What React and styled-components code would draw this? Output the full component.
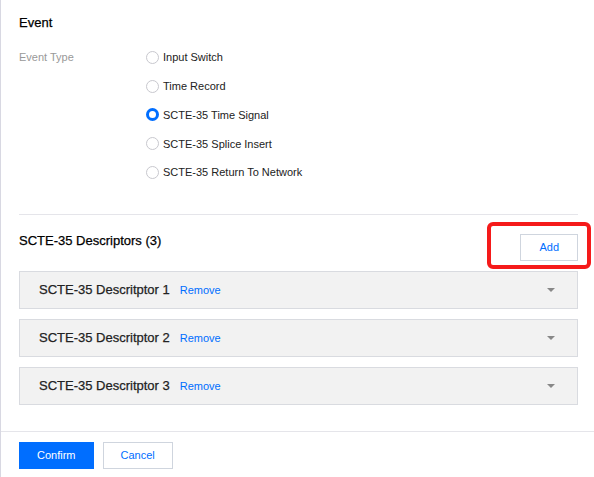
import React from 'react';
import styled, { createGlobalStyle } from 'styled-components';

const GlobalStyle = createGlobalStyle`
  html, body {
    margin: 0;
    padding: 0;
    background: #fff;
  }
  body {
    font-family: "Liberation Sans", Arial, sans-serif;
    color: #000;
  }
  * {
    box-sizing: border-box;
  }
`;

const Page = styled.div`
  width: 594px;
  height: 477px;
  background: #fff;
  border-left: 1px solid #d8d8e2;
  display: flex;
  flex-direction: column;
  overflow: hidden;
`;

const Body = styled.div`
  padding: 15px 16px 0 18px;
  display: flex;
  flex-direction: column;
`;

const Heading = styled.h3`
  margin: 0;
  font-size: 13px;
  line-height: 16px;
  font-weight: normal;
  -webkit-text-stroke: 0.25px #000;
  color: #000;
`;

const FormRow = styled.div`
  display: flex;
  margin-top: 12px;
`;

const Label = styled.div`
  width: 127px;
  flex-shrink: 0;
  font-size: 11px;
  color: #999;
  line-height: 29px;
`;

const RadioGroup = styled.div`
  display: flex;
  flex-direction: column;
`;

const RadioRow = styled.label`
  display: flex;
  align-items: center;
  height: 28.75px;
  font-size: 11px;
  color: #222;
  gap: 4px;
  cursor: pointer;
`;

const Circle = styled.span`
  width: 13px;
  height: 13px;
  border-radius: 50%;
  background: #fff;
  border: ${p => (p.$checked ? '3.5px solid #006eff' : '1px solid #c8c8ce')};
`;

const Divider = styled.div`
  height: 1px;
  background: #e5e5ea;
  margin-top: 27px;
`;

const SectionHeader = styled.div`
  display: flex;
  justify-content: space-between;
  align-items: flex-start;
  margin-top: 19px;
`;

const SectionTitle = styled.div`
  font-size: 13px;
  line-height: 14px;
  color: #000;
  -webkit-text-stroke: 0.25px #000;
`;

const AddWrap = styled.div`
  position: relative;
`;

const Highlight = styled.span`
  position: absolute;
  left: -33px;
  top: -12px;
  width: 104px;
  height: 47px;
  border: 4px solid #f51a1a;
  border-radius: 6px;
  pointer-events: none;
`;

const Button = styled.button`
  height: 27px;
  padding: 0 ${p => p.$pad || 19}px;
  font-family: inherit;
  font-size: 11px;
  border: 1px solid ${p => (p.$primary ? '#006eff' : '#cfd5de')};
  background: ${p => (p.$primary ? '#006eff' : '#fff')};
  color: ${p => (p.$primary ? '#fff' : '#006eff')};
  cursor: pointer;
`;

const Panels = styled.div`
  display: flex;
  flex-direction: column;
  gap: 10px;
  margin-top: 10px;
`;

const Panel = styled.div`
  height: 38px;
  display: flex;
  align-items: center;
  padding: 0 22px 0 19px;
  background: #f2f2f2;
  border: 1px solid #d9dbe0;
`;

const PanelTitle = styled.span`
  font-size: 13px;
  color: #222;
  -webkit-text-stroke: 0.25px #222;
`;

const RemoveLink = styled.a`
  margin-left: 10px;
  font-size: 11px;
  color: #006eff;
  cursor: pointer;
`;

const Caret = styled.span`
  margin-left: auto;
  width: 0;
  height: 0;
  border-left: 4px solid transparent;
  border-right: 4px solid transparent;
  border-top: 4px solid #888;
`;

const Footer = styled.div`
  margin-top: 26px;
  border-top: 1px solid #e5e5ea;
  padding: 10px 0 0 18px;
  display: flex;
  gap: 9px;
`;

const eventTypes = [
  'Input Switch',
  'Time Record',
  'SCTE-35 Time Signal',
  'SCTE-35 Splice Insert',
  'SCTE-35 Return To Network',
];

const descriptors = [1, 2, 3];

export default function App() {
  const [selected, setSelected] = React.useState(2);

  return (
    <Page>
      <GlobalStyle />
      <Body>
        <Heading>Event</Heading>
        <FormRow>
          <Label>Event Type</Label>
          <RadioGroup>
            {eventTypes.map((t, i) => (
              <RadioRow key={t} onClick={() => setSelected(i)}>
                <Circle $checked={selected === i} />
                {t}
              </RadioRow>
            ))}
          </RadioGroup>
        </FormRow>
        <Divider />
        <SectionHeader>
          <SectionTitle>SCTE-35 Descriptors (3)</SectionTitle>
          <AddWrap>
            <Button $pad={18}>Add</Button>
            <Highlight />
          </AddWrap>
        </SectionHeader>
        <Panels>
          {descriptors.map(n => (
            <Panel key={n}>
              <PanelTitle>SCTE-35 Descritptor {n}</PanelTitle>
              <RemoveLink>Remove</RemoveLink>
              <Caret />
            </Panel>
          ))}
        </Panels>
      </Body>
      <Footer>
        <Button $primary $pad={17}>Confirm</Button>
        <Button $pad={17}>Cancel</Button>
      </Footer>
    </Page>
  );
}
